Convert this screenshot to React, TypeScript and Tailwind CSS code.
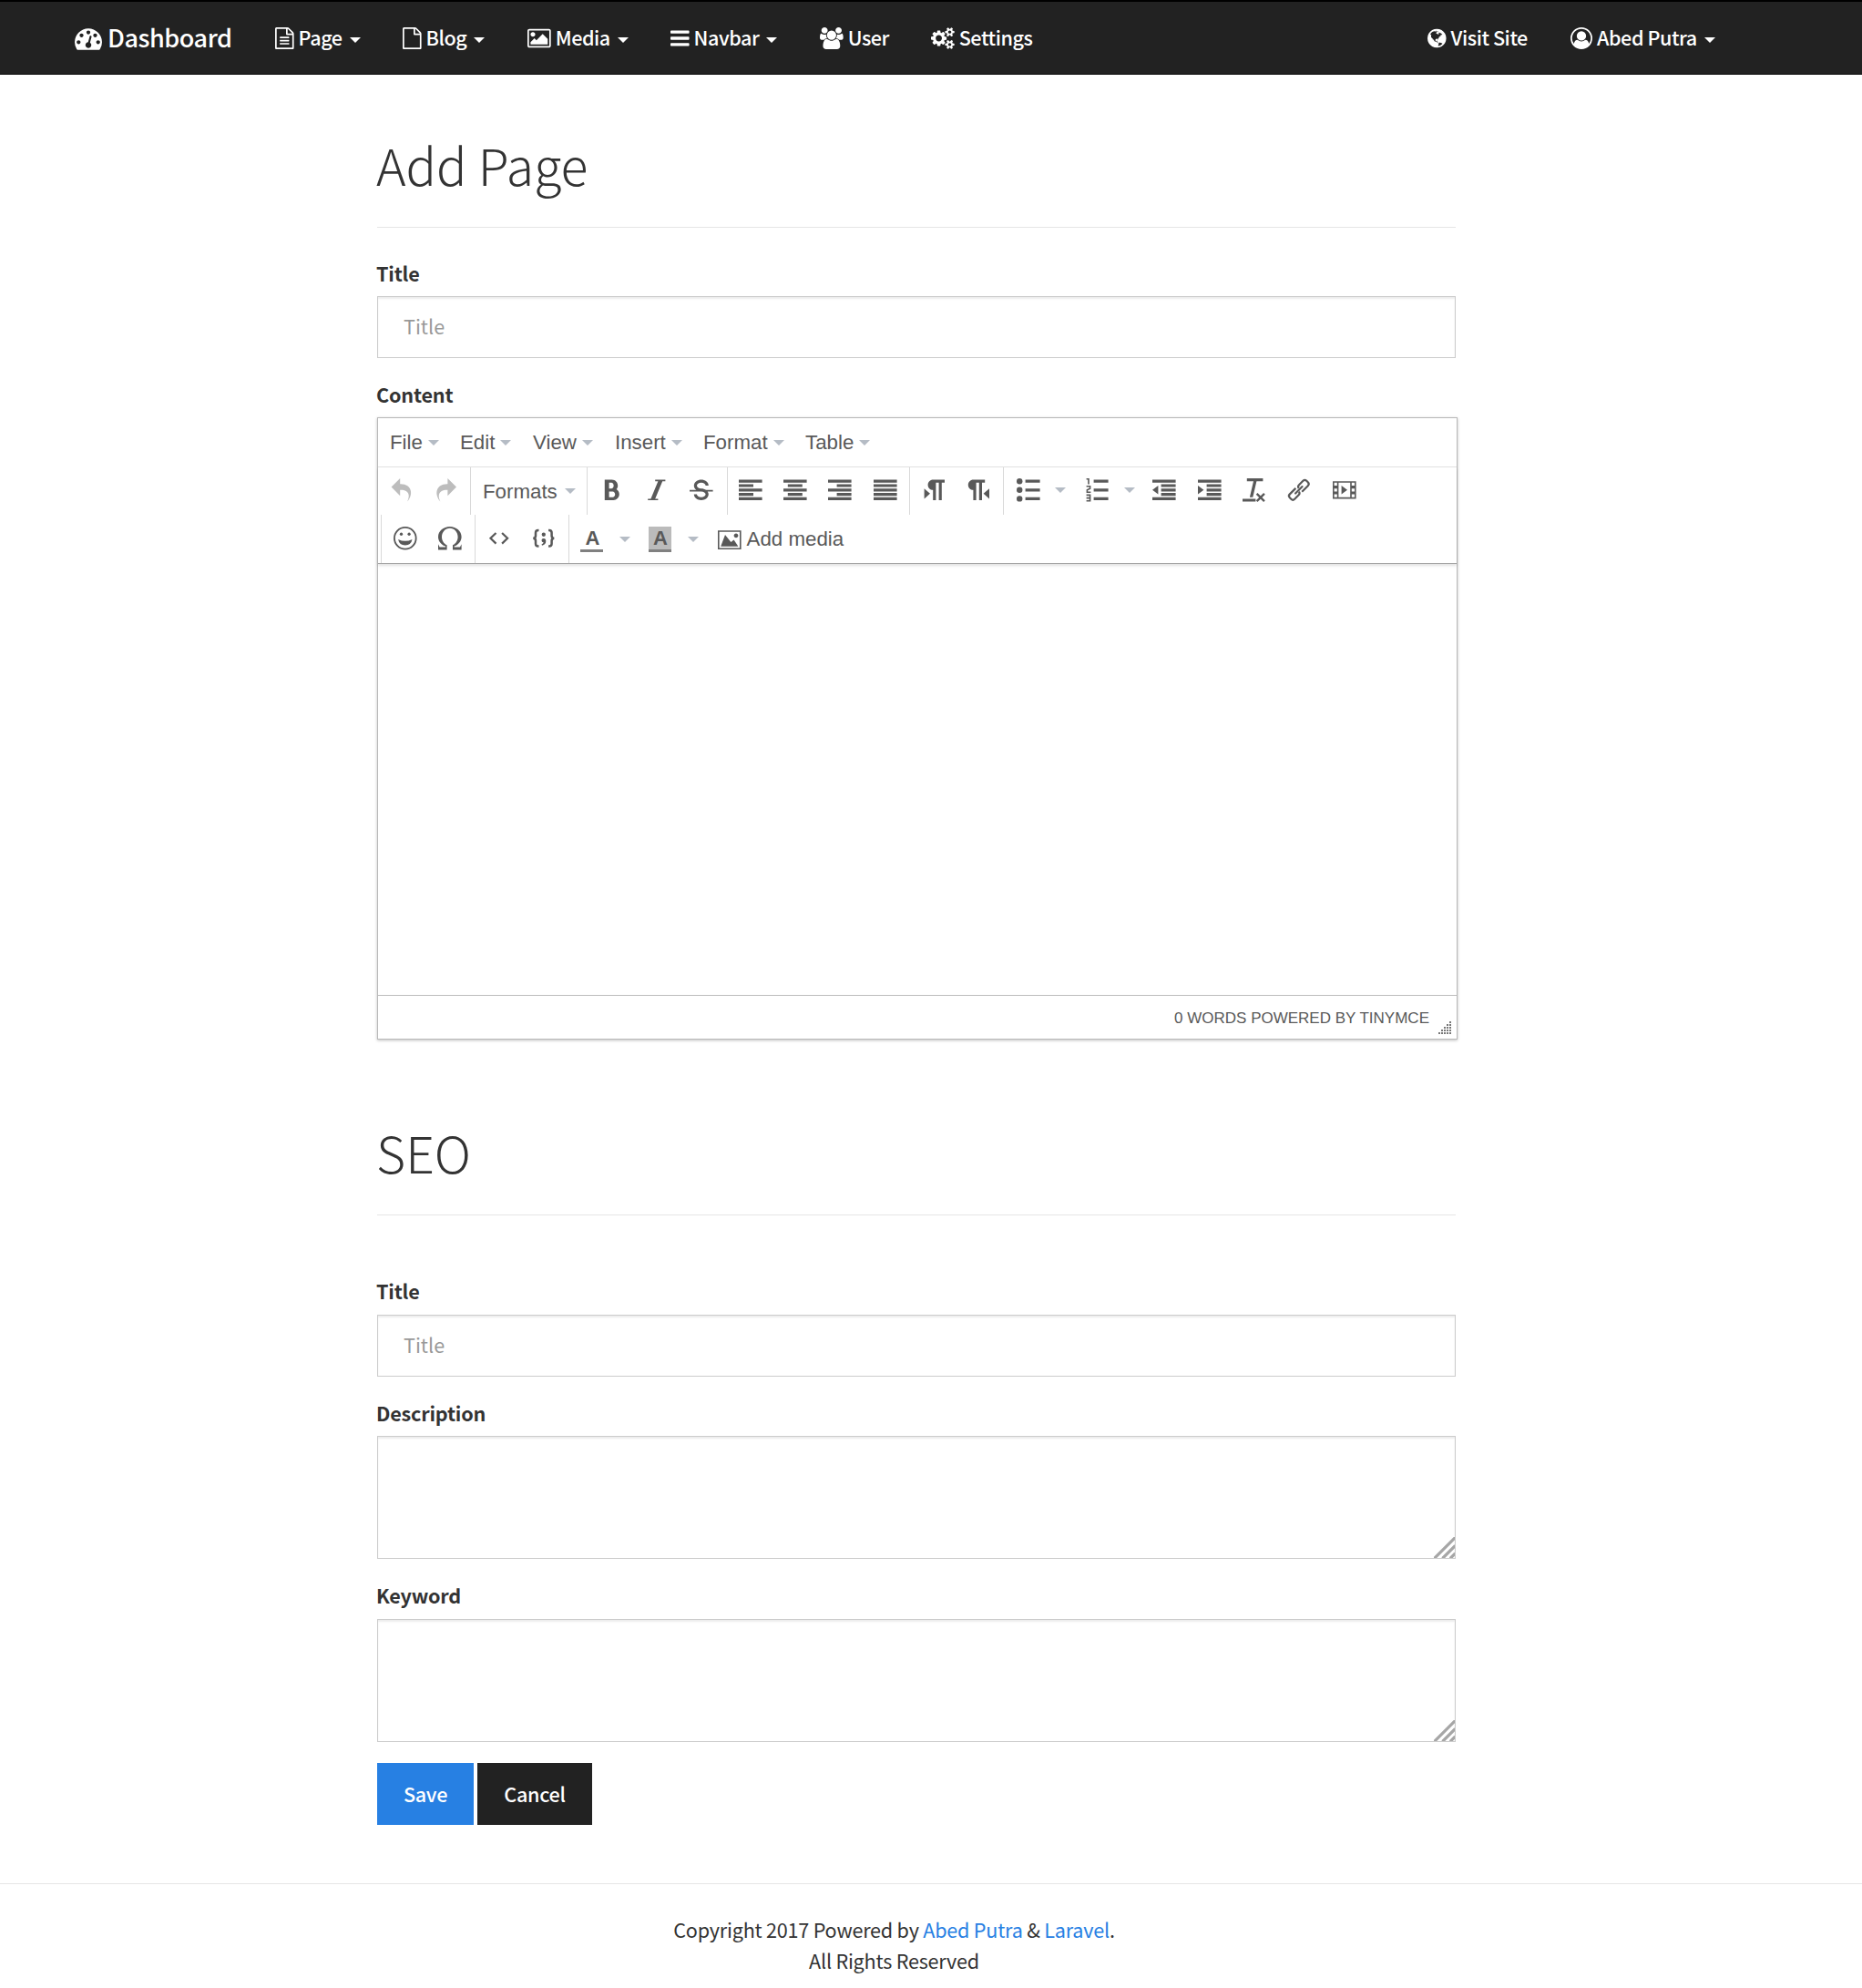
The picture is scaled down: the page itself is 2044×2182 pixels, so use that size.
import type { ReactNode } from "react";

const ICONS = {
  dashboard:
    "M384 1152q0-53-37.5-90.5t-90.5-37.5-90.5 37.5-37.5 90.5 37.5 90.5 90.5 37.5 90.5-37.5 37.5-90.5zm192-448q0-53-37.5-90.5t-90.5-37.5-90.5 37.5-37.5 90.5 37.5 90.5 90.5 37.5 90.5-37.5 37.5-90.5zm428 481l101-382q6-26-7.5-48.5t-38.5-29.5-48 6.5-30 39.5l-101 382q-60 5-107 43.5t-63 98.5q-20 77 20 146t117 89 146-20 89-117q16-60-6-117t-72-91zm660-33q0-53-37.5-90.5t-90.5-37.5-90.5 37.5-37.5 90.5 37.5 90.5 90.5 37.5 90.5-37.5 37.5-90.5zm-640-640q0-53-37.5-90.5t-90.5-37.5-90.5 37.5-37.5 90.5 37.5 90.5 90.5 37.5 90.5-37.5 37.5-90.5zm448 192q0-53-37.5-90.5t-90.5-37.5-90.5 37.5-37.5 90.5 37.5 90.5 90.5 37.5 90.5-37.5 37.5-90.5zm320 448q0 261-141 483-19 29-54 29h-1402q-35 0-54-29-141-221-141-483 0-182 71-348t191-286 286-191 348-71 348 71 286 191 191 286 71 348z",
  file: "M1468 380q28 28 48 76t20 88v1152q0 40-28 68t-68 28h-1344q-40 0-68-28t-28-68v-1600q0-40 28-68t68-28h896q40 0 88 20t76 48zm-444-244v376h376q-10-29-22-41l-313-313q-12-12-41-22zm384 1528v-1024h-416q-40 0-68-28t-28-68v-416h-768v1536h1280z",
  fileLines:
    "M384 800q0-14 9-23t23-9h704q14 0 23 9t9 23v64q0 14-9 23t-23 9h-704q-14 0-23-9t-9-23zM1120 1024q14 0 23 9t9 23v64q0 14-9 23t-23 9h-704q-14 0-23-9t-9-23v-64q0-14 9-23t23-9zM1120 1280q14 0 23 9t9 23v64q0 14-9 23t-23 9h-704q-14 0-23-9t-9-23v-64q0-14 9-23t23-9z",
  picture:
    "M640 576q0 80-56 136t-136 56-136-56-56-136 56-136 136-56 136 56 56 136zm1024 384v448h-1408v-192l320-320 160 160 512-512zm96-704h-1600q-13 0-22.5 9.5t-9.5 22.5v1216q0 13 9.5 22.5t22.5 9.5h1600q13 0 22.5-9.5t9.5-22.5v-1216q0-13-9.5-22.5t-22.5-9.5zm160 32v1216q0 66-47 113t-113 47h-1600q-66 0-113-47t-47-113v-1216q0-66 47-113t113-47h1600q66 0 113 47t47 113z",
  bars: "M1536 1344v128q0 26-19 45t-45 19h-1408q-26 0-45-19t-19-45v-128q0-26 19-45t45-19h1408q26 0 45 19t19 45zm0-512v128q0 26-19 45t-45 19h-1408q-26 0-45-19t-19-45v-128q0-26 19-45t45-19h1408q26 0 45 19t19 45zm0-512v128q0 26-19 45t-45 19h-1408q-26 0-45-19t-19-45v-128q0-26 19-45t45-19h1408q26 0 45 19t19 45z",
  users:
    "M593 896q-162 5-265 128h-134q-82 0-138-40.5t-56-118.5q0-353 124-353 6 0 43.5 21t97.5 42.5 119 21.5q67 0 133-23-5 37-5 66 0 139 81 256zm1071 637q0 120-73 189.5t-194 69.5h-874q-121 0-194-69.5t-73-189.5q0-53 3.5-103.5t14-109 26.5-108.5 43-97.5 62-81 85.5-53.5 111.5-20q10 0 43 21.5t73 48 107 48 135 21.5 135-21.5 107-48 73-48 43-21.5q61 0 111.5 20t85.5 53.5 62 81 43 97.5 26.5 108.5 14 109 3.5 103.5zm-1024-1277q0 106-75 181t-181 75-181-75-75-181 75-181 181-75 181 75 75 181zm704 384q0 159-112.5 271.5t-271.5 112.5-271.5-112.5-112.5-271.5 112.5-271.5 271.5-112.5 271.5 112.5 112.5 271.5zm576 225q0 78-56 118.5t-138 40.5h-134q-103-123-265-128 81-117 81-256 0-29-5-66 66 23 133 23 59 0 119-21.5t97.5-42.5 43.5-21q124 0 124 353zm-128-609q0 106-75 181t-181 75-181-75-75-181 75-181 181-75 181 75 75 181z",
  cogs: "M896 896q0-106-75-181t-181-75-181 75-75 181 75 181 181 75 181-75 75-181zm768 512q0-52-38-90t-90-38-90 38-38 90q0 53 37.5 90.5t90.5 37.5 90.5-37.5 37.5-90.5zm0-1024q0-52-38-90t-90-38-90 38-38 90q0 53 37.5 90.5t90.5 37.5 90.5-37.5 37.5-90.5zm-384 421v185q0 10-7 19.5t-16 10.5l-155 24q-11 35-32 76 34 48 90 115 7 11 7 20 0 12-7 19-23 30-82.5 89.5t-78.5 59.5q-11 0-21-7l-115-90q-37 19-77 31-11 108-23 155-7 24-30 24h-186q-11 0-20-7.5t-10-17.5l-23-153q-34-10-75-31l-118 89q-7 7-20 7-11 0-21-8-144-133-144-160 0-9 7-19 10-14 41-53t47-61q-23-44-35-82l-152-24q-10-1-17-9.5t-7-19.5v-185q0-10 7-19.5t16-10.5l155-24q11-35 32-76-34-48-90-115-7-11-7-20 0-12 7-20 22-30 82-89t79-59q11 0 21 7l115 90q34-18 77-32 11-108 23-154 7-24 30-24h186q11 0 20 7.5t10 17.5l23 153q34 10 75 31l118-89q8-7 20-7 11 0 21 8 144 133 144 160 0 8-7 19-12 16-42 54t-45 60q23 48 34 82l152 23q10 2 17 10.5t7 19.5zm640 533v140q0 16-149 31-12 27-30 52 51 113 51 138 0 4-4 7-122 71-124 71-8 0-46-47t-52-68q-20 2-30 2t-30-2q-14 21-52 68t-46 47q-2 0-124-71-4-3-4-7 0-25 51-138-18-25-30-52-149-15-149-31v-140q0-16 149-31 13-29 30-52-51-113-51-138 0-4 4-7 4-2 35-20t59-34 30-16q8 0 46 46.5t52 67.5q20-2 30-2t30 2q51-71 92-112l6-2q4 0 124 70 4 3 4 7 0 25-51 138 17 23 30 52 149 15 149 31zm0-1024v140q0 16-149 31-12 27-30 52 51 113 51 138 0 4-4 7-122 71-124 71-8 0-46-47t-52-68q-20 2-30 2t-30-2q-14 21-52 68t-46 47q-2 0-124-71-4-3-4-7 0-25 51-138-18-25-30-52-149-15-149-31v-140q0-16 149-31 13-29 30-52-51-113-51-138 0-4 4-7 4-2 35-20t59-34 30-16q8 0 46 46.5t52 67.5q20-2 30-2t30 2q51-71 92-112l6-2q4 0 124 70 4 3 4 7 0 25-51 138 17 23 30 52 149 15 149 31z",
  globe:
    "M768 128q209 0 385.5 103t279.5 279.5 103 385.5-103 385.5-279.5 279.5-385.5 103-385.5-103-279.5-279.5-103-385.5 103-385.5 279.5-279.5 385.5-103zm274 521q-2 1-9.5 9.5t-13.5 9.5q2 0 4.5-5t5-11 3.5-7q6-7 22-15 14-6 52-12 34-8 51 11-2-2 9.5-13t14.5-12q3-2 15-4.5t15-7.5l2-22q-12 1-17.5-7t-6.5-21q0 2-6 8 0-7-4.5-8t-11.5 1-9 1q-10-3-15-7.5t-8-16.5-4-15q-2-5-9.5-11t-9.5-10q-1-2-2.5-5.5t-3-6.5-4-5.5-5.5-2.5-7 5-7.5 10-4.5 5q-3-2-6-1.5t-4.5 1-4.5 3-5 3.5q-3 2-8.5 3t-8.5 2q15-5-1-11-10-4-16-3 9-4 7.5-12t-8.5-14h5q-1-4-8.5-8.5t-17.5-8.5-13-6q-8-5-34-9.5t-33-.5q-5 6-4.5 10.5t4 14 3.5 12.5q1 6-5.5 13t-6.5 12q0 7 14 15.5t10 21.5q-3 8-16 16t-16 12q-5 8-1.5 18.5t10.5 16.5q2 2 1.5 4t-3.5 4.5-5.5 4-6.5 3.5l-3 2q-11 5-20.5-6t-13.5-26q-7-25-16-30-23-8-29 1-5-13-41-26-25-9-58-4 6-1 0-15-7-15-19-12 3-6 4-17.5t1-13.5q3-13 12-23 1-1 7-8.5t9.5-13.5.5-6q35 4 50-11 5-5 11.5-17t10.5-17q9-6 14-5.5t14.5 5.5 14.5 5q14 1 15.5-11t-7.5-20q12 1 3-17-4-7-8-9-12-4-27 5-8 4 2 8-1-1-9.5 10.5t-16.5 17.5-16-5q-1-1-5.5-13.5t-9.5-13.5q-8 0-16 15 3-8-11-15t-24-8q19-12-8-27-7-4-20.5-5t-19.5 4q-5 7-5.5 11.5t5 8 10.5 5.5 11.5 4 8.5 3q14 10 8 14-2 1-8.5 3.5t-11.5 4.5-6 4q-3 4 0 14t-2 14q-5-5-9-17.5t-7-16.5q7 9-25 6l-10-1q-4 0-16 2t-20.5 1-13.5-8q-4-8 0-20 1-4 4-2-4-3-11-9.5t-10-8.5q-46 15-94 41 6 1 12-1 5-2 13-6.5t10-5.5q34-14 42-7l5-5q14 16 20 25-7-4-30-1-20 6-22 12 7 12 5 18-4-3-11.5-10t-14.5-11-15-5q-16 0-22 1-146 80-235 222 7 7 12 8 4 1 5 9t2.5 11 11.5-3q9 8 3 19 1-1 44 27 19 17 21 21 3 11-10 18-1-2-9-9t-9-4q-3 5 .5 18.5t10.5 12.5q-7 0-9.5 16t-2.5 35.5-1 23.5l2 1q-3 12 5.5 34.5t21.5 19.5q-13 3 20 43 6 8 8 9 3 2 12 7.5t15 10 10 10.5q4 5 10 22.5t14 23.5q-2 6 9.5 20t10.5 23q-1 0-2.5 1t-2.5 1q3 7 15.5 14t15.5 13q1 3 2 10t3 11 8 2q2-20-24-62-15-25-17-29-3-5-5.5-15.5t-4.5-14.5q2 0 6 1.5t8.5 3.5 7.5 4 2 3q-3 7 2 17.5t12 18.5 17 19 12 13q6 6 14 19.5t0 13.5q9 0 20 10.5t17 19.5q5 8 8 26t5 24q2 7 8.5 13.5t12.5 9.5l16 8 13 7q5 2 18.5 10.5t21.5 11.5q10 4 16 4t14.5-2.5 13.5-3.5q15-2 29 15t21 21q36 19 55 11-2 1 .5 7.5t8 15.5 9 14.5 5.5 8.5q5 6 18 15t18 15q6-4 7-9-3 8 7 20t18 10q14-3 14-32-31 15-49-18 0-1-2.5-5.5t-4-8.5-2.5-8.5 0-7.5 5-3q9 0 10-3.5t-2-12.5-4-13q-1-8-11-20t-12-15q-5 9-16 8t-16-9q0 1-1.5 5.5t-1.5 6.5q-13 0-15-1 1-3 2.5-17.5t3.5-22.5q1-4 5.5-12t7.5-14.5 4-12.5-4.5-9.5-17.5-2.5q-19 1-26 20-1 3-3 10.5t-5 11.5-9 7q-7 3-24 2t-24-5q-13-8-22.5-29t-9.5-37q0-10 2.5-26.5t3-25-5.5-24.5q3-2 9-9.5t10-10.5q2-1 4.5-1.5t4.5 0 4-1.5 3-6q-1-1-4-3-3-3-4-3 7 3 28.5-1.5t27.5 1.5q15 11 22-2 0-1-2.5-9.5t-.5-13.5q5 27 29 9 3 3 15.5 5t17.5 5q3 2 7 5.5t5.5 4.5 5-.5 8.5-6.5q10 14 12 24 11 40 19 44 7 3 11 2t4.5-9.5 0-14-1.5-12.5l-1-8v-18l-1-8q-15-3-18.5-12t1.5-18.5 15-18.5q1-1 8-3.5t15.5-6.5 12.5-8q21-19 15-35 7 0 11-9-1 0-5-3t-7.5-5-4.5-2q9-5 2-16 5-3 7.5-11t7.5-10q9 12 21 2 8-8 1-16 5-7 20.5-10.5t18.5-9.5q7 2 8-2t1-12 3-12q4-5 15-9t13-5l17-11q3-4 0-4 18 2 31-11 10-11-6-20 3-6-3-9.5t-15-5.5q3-1 11.5-.5t10.5-1.5q15-10-7-16-17-5-43 12zm-163 877q206-36 351-189-3-3-12.5-4.5t-12.5-3.5q-18-7-24-8 1-7-2.5-13t-8-9-12.5-8-11-7q-2-2-7-6t-7-5.5-7.5-4.5-8.5-2-10 1l-3 1q-3 1-5.5 2.5t-5.5 3-4 3 0 2.5q-21-17-36-22-5-1-11-5.5t-10.5-7-10-1.5-11.5 7q-5 5-6 15t-2 13q-7-5 0-17.5t2-18.5q-3-6-10.5-4.5t-12 4.5-11.5 8.5-9 6.5-8.5 5.5-8.5 7.5q-3 4-6 12t-5 11q-2-4-11.5-6.5t-9.5-5.5q2 10 4 35t5 38q7 31-12 48-27 25-29 40-4 22 12 26 0 7-8 20.5t-7 21.5q0 6 2 16z",
  userCircle:
    "M896 0q182 0 348 71t286 191 191 286 71 348q0 181-70.5 347t-190.5 286-286 191.5-349 71.5-349-71-285.5-191.5-190.5-286-71-347.5 71-348 191-286 286-191 348-71zm619 1351q149-205 149-455 0-156-61-298t-164-245-245-164-298-61-298 61-245 164-164 245-61 298q0 250 149 455 66-327 306-327 131 128 313 128t313-128q240 0 306 327zm-235-647q0-159-112.5-271.5t-271.5-112.5-271.5 112.5-112.5 271.5 112.5 271.5 271.5 112.5 271.5-112.5 112.5-271.5z",
};

function NavIcon({ d, units, className }: { d: string; units: number; className: string }) {
  return (
    <svg viewBox={`0 0 ${units} 1792`} className={`shrink-0 fill-current ${className}`}>
      <path d={d} />
    </svg>
  );
}

function Caret({ className }: { className: string }) {
  return (
    <svg viewBox="0 0 12 6" className={`h-[6px] w-[12px] shrink-0 fill-current ${className}`}>
      <path d="M0 0h12L6 6z" />
    </svg>
  );
}

function NavItem({
  className,
  icon,
  label,
  caret = false,
}: {
  className: string;
  icon: ReactNode;
  label: string;
  caret?: boolean;
}) {
  return (
    <a className={`flex shrink-0 items-center whitespace-nowrap ${className}`}>
      {icon}
      <span className="relative -top-[1px] ml-[5px]">{label}</span>
      {caret && <Caret className="relative top-[2px] ml-[8px]" />}
    </a>
  );
}

function Navbar() {
  return (
    <nav className="flex h-[82px] items-center border-t-2 border-b border-t-black border-b-[#090909] bg-[#222222] pl-[82px] text-[21.6px] leading-[34px] font-medium tracking-[-0.45px] text-white">
      <a className="flex w-[220px] shrink-0 items-center text-[27px]">
        <NavIcon d={ICONS.dashboard} units={1792} className="h-[30px] w-[30px]" />
        <span className="relative -top-[1px] ml-[6px]">Dashboard</span>
      </a>
      <NavItem className="w-[140px]" icon={<NavIcon d={ICONS.file + ICONS.fileLines} units={1536} className="h-[24px] w-[20.6px]" />} label="Page" caret />
      <NavItem className="w-[137px]" icon={<NavIcon d={ICONS.file} units={1536} className="h-[24px] w-[20.6px]" />} label="Blog" caret />
      <NavItem className="w-[157px]" icon={<NavIcon d={ICONS.picture} units={1920} className="h-[24px] w-[25.7px]" />} label="Media" caret />
      <NavItem className="w-[164px]" icon={<NavIcon d={ICONS.bars} units={1536} className="h-[24px] w-[20.6px]" />} label="Navbar" caret />
      <NavItem className="w-[122px]" icon={<NavIcon d={ICONS.users} units={1920} className="h-[24px] w-[25.7px]" />} label="User" />
      <NavItem className="w-[545px]" icon={<NavIcon d={ICONS.cogs} units={1920} className="h-[24px] w-[25.7px]" />} label="Settings" />
      <NavItem className="w-[157px]" icon={<NavIcon d={ICONS.globe} units={1536} className="h-[24px] w-[20.6px]" />} label="Visit Site" />
      <NavItem className="" icon={<NavIcon d={ICONS.userCircle} units={1792} className="h-[24px] w-[24px]" />} label="Abed Putra" caret />
    </nav>
  );
}

function Tool({ children, className = "" }: { children: ReactNode; className?: string }) {
  return (
    <button className={`flex h-full w-[49.3px] shrink-0 items-center justify-center ${className}`}>
      <svg viewBox="0 0 1024 1024" className="h-[25.6px] w-[25.6px] overflow-visible fill-current">
        {children}
      </svg>
    </button>
  );
}

function SplitCaret({ className = "w-[26px]" }: { className?: string }) {
  return (
    <span className={`flex h-full shrink-0 items-center ${className}`}>
      <Caret className="text-[#b5bcc5]" />
    </span>
  );
}

function Group({ className, children }: { className: string; children: ReactNode }) {
  return <div className={`flex h-full shrink-0 items-center ${className}`}>{children}</div>;
}

function MenuItem({ label, className }: { label: string; className: string }) {
  return (
    <button className={`flex shrink-0 items-center ${className}`}>
      <span className="leading-[24px]">{label}</span>
      <Caret className="ml-[6px] text-[#b5bcc5]" />
    </button>
  );
}

const SEP = "border-l border-[#d9d9d9]";

function ToolbarRowOne() {
  return (
    <div className="flex h-[52px] pb-[2px]">
      <Group className="w-[101px] pl-px text-[#bdbdbd]">
        <Tool>
          <path d="M761.862 1024c113.726-206.032 132.888-520.306-313.862-509.824v253.824l-384-384 384-384v248.372c534.962-13.942 594.57 472.214 313.862 775.628z" />
        </Tool>
        <Tool>
          <path d="M576 248.372v-248.372l384 384-384 384v-253.824c-446.75-10.482-427.588 303.792-313.86 509.824-280.712-303.414-221.1-789.57 313.86-775.628z" />
        </Tool>
      </Group>
      <div className={`-mb-[2px] flex w-[128px] items-center pl-[13px] ${SEP}`}>
        <span className="w-[90px] pt-[2px]">Formats</span>
        <Caret className="text-[#b5bcc5]" />
      </div>
      <div className={`-mb-[2px] w-[154px] pb-[2px] ${SEP}`}>
        <Group className="pl-[2px]">
          <Tool>
            <path d="M707.88 484.652c37.498-44.542 60.12-102.008 60.12-164.652 0-141.16-114.842-256-256-256h-320v896h384c141.158 0 256-114.842 256-256 0-92.956-49.798-174.496-124.12-219.348zM384 192h101.5c55.968 0 101.5 57.42 101.5 128s-45.532 128-101.5 128h-101.5v-256zM543 832h-159v-256h159c58.45 0 106 57.42 106 128s-47.55 128-106 128z" />
          </Tool>
          <Tool>
            <path d="M896 64v64h-128l-320 768h128v64h-448v-64h128l320-768h-128v-64z" />
          </Tool>
          <Tool>
            <path d="M1024 512v64h-234.506c27.504 38.51 42.506 82.692 42.506 128 0 70.878-36.66 139.026-100.58 186.964-59.358 44.518-137.284 69.036-219.42 69.036-82.138 0-160.062-24.518-219.42-69.036-63.92-47.938-100.58-116.086-100.58-186.964h128c0 69.382 87.926 128 192 128s192-58.618 192-128c0-69.382-87.926-128-192-128h-512v-64h299.518c-2.338-1.654-4.656-3.324-6.938-5.036-63.92-47.94-100.58-116.086-100.58-186.964s36.66-139.024 100.58-186.964c59.358-44.518 137.282-69.036 219.42-69.036 82.136 0 160.062 24.518 219.42 69.036 63.92 47.94 100.58 116.086 100.58 186.964h-128c0-69.382-87.926-128-192-128s-192 58.618-192 128c0 69.382 87.926 128 192 128 78.978 0 154.054 22.678 212.482 64h299.518z" />
          </Tool>
        </Group>
      </div>
      <div className={`-mb-[2px] w-[200px] pb-[2px] ${SEP}`}>
        <Group className="">
          <Tool>
            <path d="M0 64h1024v128H0zM0 256h640v128H0zM0 448h1024v128H0zM0 640h640v128H0zM0 832h1024v128H0z" />
          </Tool>
          <Tool>
            <path d="M0 64h1024v128H0zM192 256h640v128H192zM0 448h1024v128H0zM192 640h640v128H192zM0 832h1024v128H0z" />
          </Tool>
          <Tool>
            <path d="M0 64h1024v128H0zM384 256h640v128H384zM0 448h1024v128H0zM384 640h640v128H384zM0 832h1024v128H0z" />
          </Tool>
          <Tool>
            <path d="M0 64h1024v128H0zM0 256h1024v128H0zM0 448h1024v128H0zM0 640h1024v128H0zM0 832h1024v128H0z" />
          </Tool>
        </Group>
      </div>
      <div className={`-mb-[2px] w-[103px] pb-[2px] ${SEP}`}>
        <Group className="pl-[2px]">
          <Tool>
            <path d="M448 64h512v128h-128v768h-128v-768h-128v768h-128v-448c-123.712 0-224-100.288-224-224s100.288-224 224-224zM64 448l256 224-256 224z" />
          </Tool>
          <Tool>
            <path d="M256 64h512v128h-128v768h-128v-768h-128v768h-128v-448c-123.712 0-224-100.288-224-224s100.288-224 224-224zM960 896l-256-224 256-224z" />
          </Tool>
        </Group>
      </div>
      <div className={`-mb-[2px] flex-1 pb-[2px] ${SEP}`}>
        <Group className="pl-[2px]">
          <Tool>
            <path d="M384 64h640v128H384zM384 448h640v128H384zM384 832h640v128H384z" />
            <circle cx="128" cy="128" r="128" />
            <circle cx="128" cy="512" r="128" />
            <circle cx="128" cy="896" r="128" />
          </Tool>
          <SplitCaret className="w-[26px] pl-[5px]" />
          <Tool>
            <path d="M384 832h640v128h-640zM384 448h640v128h-640zM384 64h640v128h-640zM192 0v256h-64v-192h-64v-64zM128 526v50h128v64h-192v-146l128-60v-50h-128v-64h192v146zM256 704v320h-192v-64h128v-64h-128v-64h128v-64h-128v-64z" />
          </Tool>
          <SplitCaret className="w-[25px] pl-[5px]" />
          <Tool>
            <path d="M0 64h1024v128H0zM384 256h640v128H384zM384 448h640v128H384zM384 640h640v128H384zM0 832h1024v128H0zM256 320v384L0 512z" />
          </Tool>
          <Tool>
            <path d="M0 64h1024v128H0zM384 256h640v128H384zM384 448h640v128H384zM384 640h640v128H384zM0 832h1024v128H0zM0 320v384l256-192z" />
          </Tool>
          <Tool>
            <path d="M0 896h576v128H0zM192 0h704v128H192zM480 128h136L452 832H316zM658 640l134 134 134-134 66 66-134 134 134 134-66 66-134-134-134 134-66-66 134-134-134-134z" />
          </Tool>
          <Tool>
            <g fill="none" stroke="currentColor" strokeWidth="88" transform="rotate(-45 512 512)">
              <path d="M470 360H100a110 110 0 0 0-110 110v84a110 110 0 0 0 110 110H350a110 110 0 0 0 110-96" />
              <path d="M554 664H924a110 110 0 0 0 110-110v-84a110 110 0 0 0-110-110H674a110 110 0 0 0-110 96" />
              <path d="M300 512h424" strokeLinecap="round" />
            </g>
          </Tool>
          <Tool>
            <path d="M0 128v768h1024v-768h-1024zM192 832h-128v-128h128v128zM192 576h-128v-128h128v128zM192 320h-128v-128h128v128zM768 832h-512v-640h512v640zM960 832h-128v-128h128v128zM960 576h-128v-128h128v128zM960 320h-128v-128h128v128zM384 320v384l256-192z" fillRule="evenodd" />
          </Tool>
        </Group>
      </div>
    </div>
  );
}

function ToolbarRowTwo() {
  return (
    <div className="flex h-[53px] pl-[3px]">
      <Group className={`w-[103px] pb-[2px] pl-px ${SEP}`}>
        <Tool>
          <circle cx="512" cy="512" r="475" fill="none" stroke="currentColor" strokeWidth="74" />
          <circle cx="340" cy="330" r="66" />
          <circle cx="684" cy="330" r="66" />
          <path d="M205 560q307 150 614 0q-40 250-307 262q-267-12-307-262z" />
        </Tool>
        <Tool>
          <path d="M704 896h256l64-128v256h-384v-214.214c131.112-56.484 224-197.162 224-361.786 0-214.432-157.598-382.266-352-382.266-194.406 0-352 167.832-352 382.266 0 164.624 92.886 305.302 224 361.786v214.214h-384v-256l64 128h256v-32.59c-187.63-66.46-320-227.402-320-415.41 0-247.424 229.23-448 512-448s512 200.576 512 448c0 188.008-132.37 348.95-320 415.41v32.59z" />
        </Tool>
      </Group>
      <Group className={`w-[103px] pb-[2px] pl-px ${SEP}`}>
        <Tool>
          <path d="M380 280L140 512l240 232M644 280l240 232-240 232" fill="none" stroke="currentColor" strokeWidth="90" />
        </Tool>
        <Tool>
          <path d="M300 160h-30q-110 0-110 110v130q0 112-110 112q110 0 110 112v130q0 110 110 110h30M724 160h30q110 0 110 110v130q0 112 110 112q-110 0-110 112v130q0 110-110 110h-30" fill="none" stroke="currentColor" strokeWidth="100" />
          <circle cx="512" cy="350" r="86" />
          <path d="M420 596q0-80 92-80q100 0 100 120q0 150-170 190l-22-50q80-30 86-90q-86 0-86-90z" />
        </Tool>
      </Group>
      <Group className={`${SEP} pl-[12px]`}>
        <button className="flex w-[25px] flex-col items-center">
          <span className="flex h-[25px] w-[25px] items-center justify-center pl-[2px] text-[22px] leading-[25px] font-bold">A</span>
          <span className="h-[3px] w-[25px] bg-[#808080]" />
        </button>
        <SplitCaret className="w-[50px] pl-[18px]" />
        <button className="flex w-[25px] flex-col items-center">
          <span className="flex h-[25px] w-[25px] items-center justify-center bg-[#bbbbbb] pl-px text-[22px] leading-[25px] font-bold">A</span>
          <span className="h-[3px] w-[25px] bg-[#808080]" />
        </button>
        <SplitCaret className="w-[51px] pl-[18px]" />
        <button className="flex items-center">
          <svg viewBox="0 0 1024 1024" className="h-[25.6px] w-[25.6px] fill-current">
            <path d="M0 128v832h1024v-832h-1024zM960 896h-896v-704h896v704zM704 352c0-53.02 42.98-96 96-96s96 42.98 96 96-42.98 96-96 96-96-42.98-96-96zM896 832h-768l192-512 256 320 128-96z" fillRule="evenodd" />
          </svg>
          <span className="ml-[6px] leading-[24px]">Add media</span>
        </button>
      </Group>
    </div>
  );
}

function ResizeDots() {
  const dots: ReactNode[] = [];
  for (let row = 0; row < 5; row++) {
    for (let col = 4 - row; col < 5; col++) {
      dots.push(<rect key={`${row}-${col}`} x={col * 3} y={row * 3} width="2" height="2" />);
    }
  }
  return (
    <svg viewBox="0 0 15 15" className="mb-[4px] ml-[10px] h-[15px] w-[15px] shrink-0 self-end fill-[#777777]">
      {dots}
    </svg>
  );
}

function Editor() {
  return (
    <div className="flex h-[683px] w-[1186px] flex-col border border-[#b8b8b8] bg-white font-['Liberation_Sans',Arial,sans-serif] text-[22.3px] text-[#595959] shadow-[0_1px_3px_rgba(0,0,0,0.25)]">
      <div className="flex h-[54px] items-center border-b border-[#e2e2e2] pl-[13px]">
        <MenuItem label="File" className="w-[77px]" />
        <MenuItem label="Edit" className="w-[80px]" />
        <MenuItem label="View" className="w-[90px]" />
        <MenuItem label="Insert" className="w-[97px]" />
        <MenuItem label="Format" className="w-[112px]" />
        <MenuItem label="Table" className="" />
      </div>
      <div className="relative h-[106px] border-b border-[#a5a5a5] shadow-[0_2px_3px_rgba(0,0,0,0.12)]">
        <ToolbarRowOne />
        <ToolbarRowTwo />
      </div>
      <div className="flex-1" />
      <div className="flex h-[48px] items-center justify-end border-t border-[#bcbcbc] pr-[5px]">
        <span className="pt-[2px] text-[17px] leading-[20px]">0 WORDS POWERED BY TINYMCE</span>
        <ResizeDots />
      </div>
    </div>
  );
}

function Heading({ children, className }: { children: ReactNode; className: string }) {
  return <h1 className={`-ml-px text-[55.4px] leading-[60px] font-light ${className}`}>{children}</h1>;
}

function Label({ children, className }: { children: ReactNode; className: string }) {
  return (
    <label className={`-ml-px block h-[33px] leading-[33px] font-bold tracking-[-0.2px] ${className}`}>{children}</label>
  );
}

function TextInput() {
  return (
    <input
      placeholder="Title"
      className="block h-[68px] w-[1184px] border border-[#cccccc] px-[28px] pb-[3px] shadow-[inset_0_2px_2px_rgba(0,0,0,0.075)] placeholder:text-[#999999]"
    />
  );
}

function TextArea() {
  return (
    <div className="relative h-[135px] w-[1184px] border border-[#cccccc] shadow-[inset_0_2px_2px_rgba(0,0,0,0.075)]">
      <textarea className="block h-full w-full resize-none px-[28px] outline-none" />
      <svg viewBox="0 0 23 23" className="absolute right-0 bottom-0 h-[23px] w-[23px]">
        <path d="M0.5 23.5L23.5 0.5M9.5 23.5L23.5 9.5M18 23.5L23.5 18" fill="none" stroke="#a6a6a6" strokeWidth="3.2" />
      </svg>
    </div>
  );
}

export default function App() {
  return (
    <div className="h-[2182px] w-[2044px] overflow-hidden bg-white font-['Noto_Sans_CJK_SC','Noto_Sans',sans-serif] text-[21.6px] text-[#333333]">
      <Navbar />
      <main className="ml-[414px] w-[1184px]">
        <Heading className="mt-[68px]">Add Page</Heading>
        <hr className="mt-[39px] border-t border-[#e6e6e6]" />
        <Label className="mt-[33px] mb-[9px]">Title</Label>
        <TextInput />
        <Label className="mt-[23px] mb-[9px]">Content</Label>
        <Editor />
        <Heading className="mt-[93px]">SEO</Heading>
        <hr className="mt-[39px] border-t border-[#e6e6e6]" />
        <Label className="mt-[66px] mb-[10px]">Title</Label>
        <TextInput />
        <Label className="mt-[23px] mb-[9px]">Description</Label>
        <TextArea />
        <Label className="mt-[23px] mb-[10px]">Keyword</Label>
        <TextArea />
        <div className="mt-[23px] flex gap-[4px] font-medium tracking-[-0.3px] text-white">
          <button className="h-[68px] w-[106px] pt-px bg-[#2780e3]">Save</button>
          <button className="h-[68px] w-[126px] pt-px bg-[#222222]">Cancel</button>
        </div>
      </main>
      <footer className="mt-[64px] border-t border-[#e6e6e6] pt-[33px] pr-[81px] text-center leading-[34px] tracking-[-0.22px]">
        <p>
          Copyright 2017 Powered by <a className="text-[#2780e3]">Abed Putra</a> &amp; <a className="text-[#2780e3]">Laravel</a>.
        </p>
        <p>All Rights Reserved</p>
      </footer>
    </div>
  );
}
